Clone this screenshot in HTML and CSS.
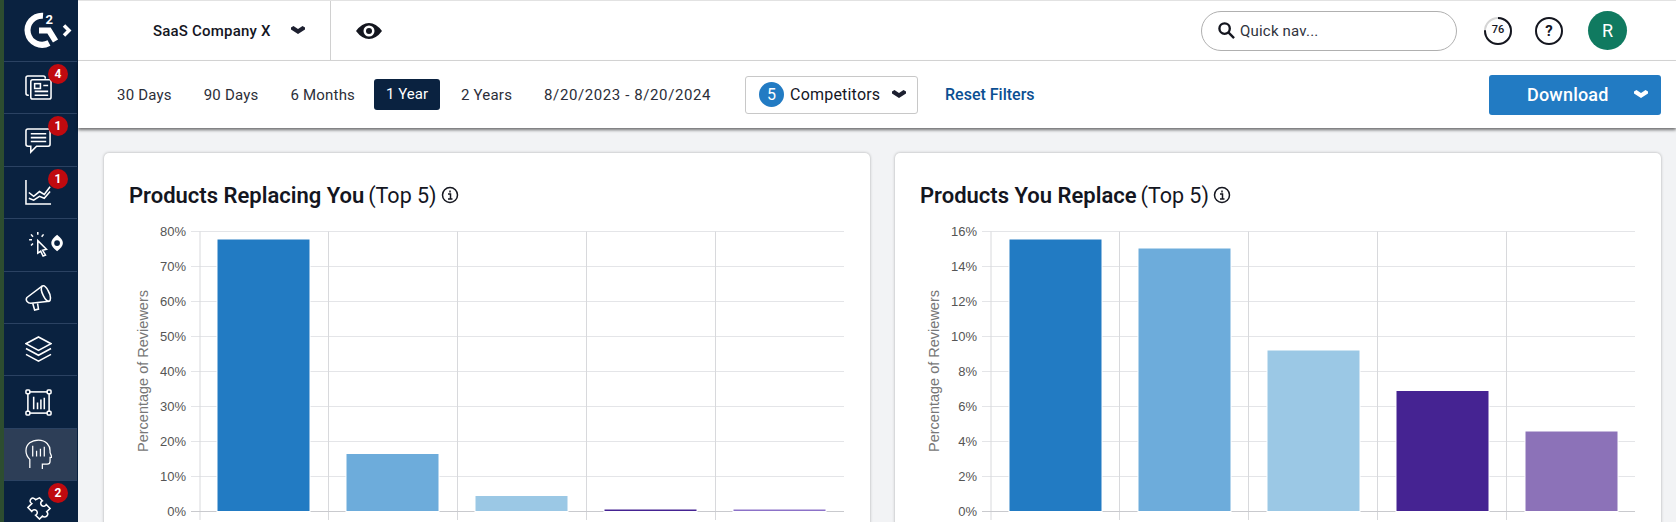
FILE: index.html
```html
<!DOCTYPE html>
<html lang="en">
<head>
<meta charset="UTF-8">
<title>Competitors</title>
<link rel="stylesheet" href="styles.css">
</head>
<body>
<nav class="sidebar">
    <div class="logo">
        <svg width="40" height="40" viewBox="0 0 40 40">
            <path class="logo-ring" d="M22 4.800 A14.500 14.500 0 1 0 28 32"/>
            <path class="logo-ring" d="M18 19.500 H28 L34.500 30"/>
            <text class="logo-two" x="24.500" y="13">2</text>
        </svg>
        <svg class="logo-arrow" width="10" height="13" viewBox="0 0 10 12"><path d="M2 1 L7 6 L2 11"/></svg>
    </div>
    <a class="nav-item">
        <svg class="nav-icon" viewBox="0 0 28 28">
            <path d="M4 22 H3 Q1 22 1 20 V4 Q1 2 3 2 H19 Q21 2 21 4 V5"/>
            <rect x="6" y="6" width="21" height="20" rx="2"/>
            <rect x="10" y="10" width="6" height="5"/>
            <path d="M19 12 H24 M10 18 H24 M10 22 H24"/>
        </svg>
        <span class="badge">4</span>
    </a>
    <a class="nav-item">
        <svg class="nav-icon" viewBox="0 0 28 28">
            <path d="M3 2 H24 Q26 2 26 4 V18 Q26 20 24 20 H12 L6 26 V20 H3 Q1 20 1 18 V4 Q1 2 3 2 Z"/>
            <path d="M6 7 H22 M6 11 H22 M6 15 H22"/>
        </svg>
        <span class="badge">1</span>
    </a>
    <a class="nav-item">
        <svg class="nav-icon" viewBox="0 0 28 28">
            <path d="M1 1 V26 H27"/>
            <path d="M4 14 L9 18 L15 13 L20 16 L26 8"/>
            <path d="M4 20 L9 22 L15 18 L20 20 L26 13"/>
        </svg>
        <span class="badge">1</span>
    </a>
    <a class="nav-item">
        <svg class="nav-icon nav-icon-wide" viewBox="0 0 36 28">
            <path d="M10 10 L19 19 L15 20 L18 25 L15.500 26 L13 21 L10 23 Z"/>
            <path d="M10 1 V4 M3 3.500 L5 6 M16 3.500 L14 6 M1 9 H4 M3 15 L5 13"/>
            <path class="nav-fill" d="M30 4 C34 7 36 10 36 12.500 C36 15 34 18 30 21 C26 18 24 15 24 12.500 C24 10 26 7 30 4 Z"/>
            <circle class="nav-dark" cx="30" cy="12.500" r="3"/>
        </svg>
    </a>
    <a class="nav-item">
        <svg class="nav-icon" viewBox="0 0 28 28">
            <path d="M2 14 L18 2 C20 1 22 3 24 7 C27 12 27 17 25 18 L6 20 C3 20 0 17 2 14 Z"/>
            <path d="M18 2 C16 4 17 8 19 12 C21 16 23 18 25 18"/>
            <path d="M8 20 L10 27 L14 26 L13 20"/>
        </svg>
    </a>
    <a class="nav-item">
        <svg class="nav-icon" viewBox="0 0 28 28">
            <path d="M14 1 L27 8 L14 15 L1 8 Z"/>
            <path d="M1 13 L14 20 L27 13"/>
            <path d="M1 19 L14 26 L27 19"/>
        </svg>
    </a>
    <a class="nav-item">
        <svg class="nav-icon" viewBox="0 0 28 28">
            <rect x="3" y="3" width="22" height="22"/>
            <rect class="nav-handle" x="1" y="1" width="4" height="4" rx="1"/>
            <rect class="nav-handle" x="23" y="1" width="4" height="4" rx="1"/>
            <rect class="nav-handle" x="1" y="23" width="4" height="4" rx="1"/>
            <rect class="nav-handle" x="23" y="23" width="4" height="4" rx="1"/>
            <path d="M9 8 V21 M13 14 V21 M16.500 11 V21 M20 9 V21"/>
        </svg>
    </a>
    <a class="nav-item nav-item-active">
        <svg class="nav-icon nav-icon-tall" viewBox="0 0 28 32">
            <path d="M5 30 V21 C2 18 1 15 1 12 C1 5 7 1 14 1 C22 1 26 7 26 12 V14 L28 19 H26 V23 C26 25 25 26 23 26 H18 V31"/>
            <path d="M8 7 V18 M12 12 V18 M16 10 V18 M20 8 V18"/>
        </svg>
    </a>
    <a class="nav-item">
        <svg class="nav-icon" viewBox="-1 0 28 28">
            <path d="M14 5 L17 8 A3 3 0 1 0 21 12 L25 16 L21.500 19.500 A3 3 0 1 1 17 24 L14 27 L10 23 A3 3 0 1 0 6 19 L2 15 L6 11 A3 3 0 1 1 10 7 Z"/>
        </svg>
        <span class="badge">2</span>
    </a>
</nav>

<div class="page">
    <header class="topbar">
        <div class="company-select">
            <span class="company-name">SaaS Company X</span>
            <svg class="chevron" viewBox="0 0 14 9"><path d="M0 1.500 L2.500 0 L7 3 L11.500 0 L14 1.500 V3.500 L7 8 L0 3.500 Z"/></svg>
        </div>
        <div class="view-eye">
            <svg width="26" height="16" viewBox="0 0 26 16">
                <path class="eye-shape" fill-rule="evenodd" d="M0 8 Q6 0 13 0 Q20 0 26 8 Q20 16 13 16 Q6 16 0 8 Z M13 2.500 A5.500 5.500 0 1 0 13 13.500 A5.500 5.500 0 1 0 13 2.500 Z"/>
                <circle class="eye-shape" cx="13" cy="8" r="3"/>
            </svg>
        </div>
        <div class="quick-nav">
            <svg width="17" height="17" viewBox="0 0 18 18"><circle class="search-line" cx="7" cy="7" r="5.500"/><path class="search-line" d="M11 11 L17 17"/></svg>
            <span>Quick nav...</span>
        </div>
        <div class="score">
            <svg width="30" height="30" viewBox="0 0 30 30">
                <circle class="score-track" cx="15" cy="15" r="13"/>
                <circle class="score-value" cx="15" cy="15" r="13" pathLength="100" stroke-dasharray="76 100" transform="rotate(-90 15 15)"/>
            </svg>
            <span class="score-number">76</span>
        </div>
        <div class="help">?</div>
        <div class="avatar">R</div>
    </header>

    <div class="filterbar">
        <a class="range">30 Days</a>
        <a class="range">90 Days</a>
        <a class="range">6 Months</a>
        <a class="range range-active">1 Year</a>
        <a class="range">2 Years</a>
        <a class="range range-dates">8/20/2023 - 8/20/2024</a>
        <div class="competitors">
            <span class="competitors-count">5</span>
            <span>Competitors</span>
            <svg class="chevron" viewBox="0 0 14 9"><path d="M0 1.500 L2.500 0 L7 3 L11.500 0 L14 1.500 V3.500 L7 8 L0 3.500 Z"/></svg>
        </div>
        <a class="reset">Reset Filters</a>
        <button class="download">
            <span>Download</span>
            <svg class="chevron chevron-white" viewBox="0 0 14 9"><path d="M0 1.500 L2.500 0 L7 3 L11.500 0 L14 1.500 V3.500 L7 8 L0 3.500 Z"/></svg>
        </button>
    </div>

    <main class="cards">
        <section class="card">
            <h2 class="card-title">
                <strong>Products Replacing You</strong>
                <span>(Top 5)</span>
                <svg class="info" viewBox="0 0 18 18"><circle cx="9" cy="9" r="7.500"/><path d="M7 8 H9.500 V13 M7 13 H11.500"/><path d="M9 4.500 V6.500"/></svg>
            </h2>
            <svg class="chart" width="766" height="310" viewBox="0 0 766 310">
                <path class="grid" d="M87 19.500 H740 M87 54.500 H740 M87 89.500 H740 M87 124.500 H740 M87 159.500 H740 M87 194.500 H740 M87 229.500 H740 M87 264.500 H740"/>
                <path class="grid-vertical" d="M96 19.500 V308 M224.500 19.500 V308 M353.500 19.500 V308 M482.500 19.500 V308 M611.500 19.500 V308"/>
                <path class="axis" d="M87 299.500 H740"/>
                <rect class="bar" x="113" y="27" width="93" height="272.500" fill="#227bc3"/>
                <rect class="bar" x="242" y="241.500" width="93" height="58" fill="#6dacdb"/>
                <rect class="bar" x="371" y="283.500" width="93" height="16" fill="#9bc8e5"/>
                <rect class="bar" x="500" y="297" width="93" height="2.500" fill="#452392"/>
                <rect class="bar" x="629" y="297" width="93" height="2.500" fill="#8c72c8"/>
                <text class="tick" x="82" y="24">80%</text>
                <text class="tick" x="82" y="59">70%</text>
                <text class="tick" x="82" y="94">60%</text>
                <text class="tick" x="82" y="129">50%</text>
                <text class="tick" x="82" y="164">40%</text>
                <text class="tick" x="82" y="199">30%</text>
                <text class="tick" x="82" y="234">20%</text>
                <text class="tick" x="82" y="269">10%</text>
                <text class="tick" x="82" y="304">0%</text>
                <text class="axis-title" transform="translate(44 159) rotate(-90)">Percentage of Reviewers</text>
            </svg>
        </section>
        <section class="card">
            <h2 class="card-title">
                <strong>Products You Replace</strong>
                <span>(Top 5)</span>
                <svg class="info" viewBox="0 0 18 18"><circle cx="9" cy="9" r="7.500"/><path d="M7 8 H9.500 V13 M7 13 H11.500"/><path d="M9 4.500 V6.500"/></svg>
            </h2>
            <svg class="chart" width="766" height="310" viewBox="0 0 766 310">
                <path class="grid" d="M87 19.500 H740 M87 54.500 H740 M87 89.500 H740 M87 124.500 H740 M87 159.500 H740 M87 194.500 H740 M87 229.500 H740 M87 264.500 H740"/>
                <path class="grid-vertical" d="M96 19.500 V308 M224.500 19.500 V308 M353.500 19.500 V308 M482.500 19.500 V308 M611.500 19.500 V308"/>
                <path class="axis" d="M87 299.500 H740"/>
                <rect class="bar" x="114" y="27" width="93" height="272.500" fill="#227bc3"/>
                <rect class="bar" x="243" y="36" width="93" height="263.500" fill="#6dacdb"/>
                <rect class="bar" x="372" y="138" width="93" height="161.500" fill="#9bc8e5"/>
                <rect class="bar" x="501" y="178.500" width="93" height="121" fill="#452392"/>
                <rect class="bar" x="630" y="219" width="93" height="80.500" fill="#8c72b8"/>
                <text class="tick" x="82" y="24">16%</text>
                <text class="tick" x="82" y="59">14%</text>
                <text class="tick" x="82" y="94">12%</text>
                <text class="tick" x="82" y="129">10%</text>
                <text class="tick" x="82" y="164">8%</text>
                <text class="tick" x="82" y="199">6%</text>
                <text class="tick" x="82" y="234">4%</text>
                <text class="tick" x="82" y="269">2%</text>
                <text class="tick" x="82" y="304">0%</text>
                <text class="axis-title" transform="translate(44 159) rotate(-90)">Percentage of Reviewers</text>
            </svg>
        </section>
    </main>
</div>
</body>
</html>
```

FILE: styles.css
```css
* {
    box-sizing: border-box;
}

body {
    margin: 0;
    height: 522px;
    overflow: hidden;
    display: flex;
    background-color: #f2f3f5;
    font-family: "Roboto", "Liberation Sans", sans-serif;
    color: #14161f;
}

/* sidebar */
.sidebar {
    width: 78px;
    flex: none;
    background-color: #0a2240;
    border-left: 4px solid #2d4d30;
}

.logo {
    height: 61px;
    display: flex;
    align-items: center;
    padding-left: 17px;
    gap: 1px;
}

.logo-ring {
    fill: none;
    stroke: #fff;
    stroke-width: 6;
}

.logo-two {
    fill: #fff;
    font-size: 13px;
    font-weight: 700;
}

.logo-arrow path {
    fill: none;
    stroke: #fff;
    stroke-width: 3.500;
}

.nav-item {
    position: relative;
    height: 52.4px;
    margin-right: 1px;
    display: flex;
    align-items: center;
    justify-content: center;
    padding-right: 4px;
    border-top: 1px solid #2b4262;
}

.nav-item-active {
    background-color: #2d3e57;
}

.nav-icon {
    width: 27px;
    height: 27px;
    fill: none;
    stroke: #fff;
    stroke-width: 1.600;
}

.nav-icon-wide {
    width: 35px;
    margin-left: 14px;
}

.nav-icon-tall {
    height: 31px;
    stroke-width: 1.300;
}

.nav-fill {
    fill: #fff;
    stroke: none;
}

.nav-dark {
    fill: #0a2240;
    stroke: none;
}

.nav-handle {
    fill: #0a2240;
}

.badge {
    position: absolute;
    top: 2px;
    left: 44px;
    width: 20px;
    height: 20px;
    border-radius: 50%;
    background-color: #c00a0f;
    color: #fff;
    font-size: 12px;
    font-weight: 700;
    line-height: 20px;
    text-align: center;
}

/* top bars */
.page {
    flex: 1;
    min-width: 0;
}

.topbar {
    height: 61px;
    display: flex;
    align-items: center;
    background-color: #fff;
    border-top: 1px solid #e2e2e2;
    border-bottom: 1px solid #d8d8d8;
}

.company-select {
    width: 253px;
    height: 100%;
    display: flex;
    align-items: center;
    padding-left: 75px;
    border-right: 1px solid #d0d0d0;
}

.company-name {
    font-size: 15px;
    font-weight: 500;
    width: 119px;
    letter-spacing: 0.2px;
    white-space: nowrap;
}

.chevron {
    width: 14px;
    height: 9px;
    fill: #1d2030;
}

.company-select .chevron {
    margin-left: 19px;
}

.chevron-white {
    fill: #fff;
}

.view-eye {
    margin-left: 25px;
    display: flex;
}

.eye-shape {
    fill: #14161f;
}

.quick-nav {
    margin-left: auto;
    width: 256px;
    height: 40px;
    display: flex;
    align-items: center;
    gap: 5px;
    padding-left: 16px;
    border: 1px solid #b0b0b0;
    border-radius: 20px;
    font-size: 15px;
    letter-spacing: 0.2px;
    color: #30333d;
}

.search-line {
    fill: none;
    stroke: #14161f;
    stroke-width: 2.500;
}

.score {
    position: relative;
    width: 30px;
    height: 30px;
    margin-left: 26px;
}

.score svg {
    display: block;
}

.score-track {
    fill: none;
    stroke: #d5d5d5;
    stroke-width: 2;
}

.score-value {
    fill: none;
    stroke: #14161f;
    stroke-width: 2;
}

.score-number {
    position: absolute;
    top: 0;
    left: 0;
    width: 30px;
    line-height: 28px;
    text-align: center;
    font-size: 11px;
    font-weight: 500;
}

.help {
    width: 28px;
    height: 28px;
    margin-left: 22px;
    border: 2px solid #14161f;
    border-radius: 50%;
    font-size: 15px;
    font-weight: 700;
    line-height: 24px;
    text-align: center;
}

.avatar {
    width: 39px;
    height: 39px;
    margin-left: 25px;
    margin-right: 49px;
    border-radius: 50%;
    background-color: #107a60;
    color: #fff;
    font-size: 18px;
    line-height: 39px;
    text-align: center;
}

.filterbar {
    position: relative;
    height: 67px;
    display: flex;
    align-items: center;
    padding-left: 39px;
    padding-right: 15px;
    background-color: #fff;
    box-shadow: 0 2px 3px rgba(0, 0, 0, 0.55);
    font-size: 15px;
    white-space: nowrap;
}

.range {
    color: #2b2e38;
    margin-right: 32px;
    letter-spacing: 0.2px;
}

.range-active {
    width: 66px;
    height: 31px;
    margin-left: -13px;
    margin-right: 21px;
    border-radius: 3px;
    background-color: #0a2240;
    color: #fff;
    letter-spacing: 0;
    line-height: 31px;
    text-align: center;
}

.range-dates {
    margin-right: 34px;
    letter-spacing: 0.6px;
}

.competitors {
    width: 173px;
    height: 38px;
    display: flex;
    align-items: center;
    gap: 6px;
    padding-left: 13px;
    border: 1px solid #c8c8c8;
    border-radius: 3px;
    font-size: 16px;
    letter-spacing: 0.2px;
}

.competitors .chevron {
    margin-left: 6px;
}

.competitors-count {
    width: 25px;
    height: 25px;
    border-radius: 50%;
    background-color: #227bc3;
    color: #fff;
    line-height: 25px;
    text-align: center;
}

.reset {
    margin-left: 27px;
    color: #0b4f92;
    font-size: 16px;
    font-weight: 500;
}

.download {
    width: 172px;
    height: 40px;
    margin-left: auto;
    display: flex;
    align-items: center;
    padding: 0 13px 0 38px;
    border: none;
    border-radius: 3px;
    background-color: #227bc3;
    color: #fff;
    font-family: inherit;
    font-size: 18px;
    font-weight: 500;
    letter-spacing: 0.2px;
}

.download .chevron {
    margin-left: auto;
}

/* cards */
.cards {
    display: grid;
    grid-template-columns: 766px 766px;
    gap: 25px;
    padding: 25px 15px 0 26px;
}

.card {
    height: 400px;
    border-radius: 5px;
    background-color: #fff;
    box-shadow: 0 0 3px rgba(0, 0, 0, 0.3);
    padding-top: 25px;
}

.card-title {
    height: 34px;
    margin: 0;
    padding-left: 25px;
    display: flex;
    align-items: center;
    font-size: 21.500px;
    font-weight: 400;
    white-space: nowrap;
}

.card-title strong {
    font-size: 22px;
    font-weight: 600;
}

.card-title span {
    margin-left: 4px;
}

.info {
    width: 18px;
    height: 18px;
    margin-left: 4px;
    fill: none;
    stroke: #14161f;
    stroke-width: 1.500;
}

.chart {
    display: block;
}

.grid {
    fill: none;
    stroke: #e4e5e8;
    stroke-width: 1;
}

.grid-vertical {
    fill: none;
    stroke: #d8d9dc;
    stroke-width: 1;
}

.axis {
    fill: none;
    stroke: #c9cace;
    stroke-width: 1;
}

.bar {
    stroke: #fff;
    stroke-width: 1;
}

.tick {
    fill: #555;
    font-family: "Liberation Sans", sans-serif;
    font-size: 13px;
    text-anchor: end;
}

.axis-title {
    fill: #777;
    font-family: "Liberation Sans", sans-serif;
    font-size: 14.500px;
    text-anchor: middle;
}
```
